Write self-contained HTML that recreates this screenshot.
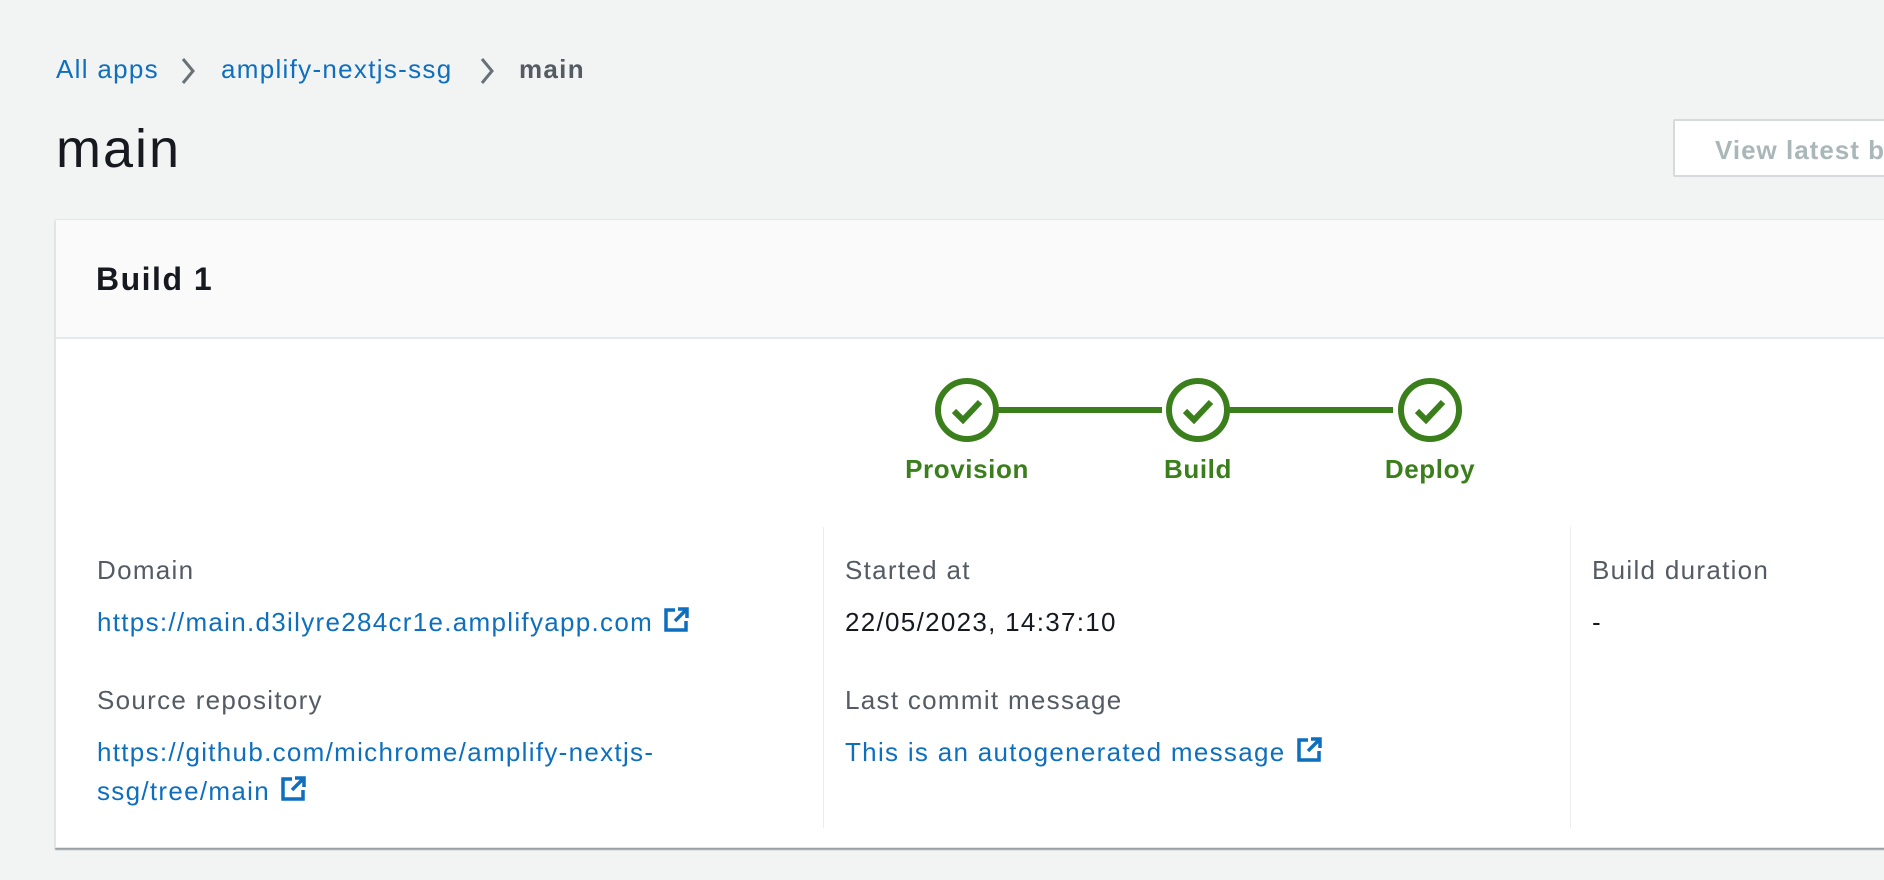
<!DOCTYPE html>
<html><head><meta charset="utf-8"><style>
*{margin:0;padding:0;box-sizing:border-box}
body{width:1884px;height:880px;background:#f2f3f3;font-family:"Liberation Sans",sans-serif;position:relative;overflow:hidden;color:#16191f}
.a{position:absolute;white-space:nowrap}
.lk{color:#0f6fbf}
.lab{color:#545b64;font-size:26px;letter-spacing:1.3px}
.val{font-size:26px;letter-spacing:1.3px}
.bc{font-size:26px;letter-spacing:1.3px}
.card{position:absolute;left:55px;top:219px;width:1860px;height:629px;background:#fff;border:1px solid #e3e6e6;box-shadow:0 2px 1px #99a0a4}
.hdr{position:absolute;left:0;top:0;right:0;height:119px;background:#fafafa;border-bottom:2px solid #e6e9e9}
.g{color:#3b7f1c;font-weight:bold;font-size:26px;letter-spacing:0.6px;transform:translateX(-50%)}
.ext{display:inline-block;vertical-align:-2px;margin-left:10px}
</style></head><body>
<div class="a bc lk" style="left:56px;top:54px">All apps</div>
<svg class="a" style="left:178px;top:56px" width="20" height="30"><path d="M5 3 L15 15 L5 27" stroke="#687078" stroke-width="3" fill="none"/></svg>
<div class="a bc lk" style="left:221px;top:54px">amplify-nextjs-ssg</div>
<svg class="a" style="left:477px;top:56px" width="20" height="30"><path d="M5 3 L15 15 L5 27" stroke="#687078" stroke-width="3" fill="none"/></svg>
<div class="a bc" style="left:519px;top:54px;font-weight:bold;color:#545b64">main</div>
<div class="a" style="left:56px;top:118px;font-size:54px;letter-spacing:2px">main</div>
<div class="a" style="left:1673px;top:119px;width:260px;height:58px;background:#fff;border:2px solid #d5dbdb;border-radius:2px;color:#aab7b8;font-weight:bold;font-size:26px;letter-spacing:1px;padding:14px 0 0 40px">View latest build</div>
<div class="card">
<div class="hdr"><div class="a" style="left:40px;top:41px;font-size:32px;letter-spacing:1.5px;font-weight:bold">Build 1</div></div>
<svg class="a" style="left:870px;top:155px" width="600" height="80">
<g stroke="#3b7f1c" stroke-width="6" fill="none">
<line x1="72" y1="35" x2="236" y2="35"/><line x1="303" y1="35" x2="467" y2="35"/>
<circle cx="41" cy="35" r="29"/><circle cx="272" cy="35" r="29"/><circle cx="504" cy="35" r="29"/>
<path d="M28 36 L37 45 L54 27"/><path d="M259 36 L268 45 L285 27"/><path d="M491 36 L500 45 L517 27"/>
</g></svg>
<div class="a g" style="left:911px;top:234px">Provision</div>
<div class="a g" style="left:1142px;top:234px">Build</div>
<div class="a g" style="left:1374px;top:234px">Deploy</div>
<div class="a" style="left:767px;top:307px;width:1px;height:301px;background:#eaeded"></div>
<div class="a" style="left:1514px;top:307px;width:1px;height:301px;background:#eaeded"></div>
<div class="a lab" style="left:41px;top:335px">Domain</div>
<div class="a val lk" style="left:41px;top:387px">https://main.d3ilyre284cr1e.amplifyapp.com<svg class="ext" width="26" height="26" viewBox="0 0 26 26"><path d="M12 3H3v20h20v-9" stroke="#0f6fbf" stroke-width="3.5" fill="none"/><path d="M15 2h9v9M23 3L12 14" stroke="#0f6fbf" stroke-width="3.5" fill="none"/></svg></div>
<div class="a lab" style="left:41px;top:465px">Source repository</div>
<div class="a val lk" style="left:41px;top:517px">https://github.com/michrome/amplify-nextjs-</div>
<div class="a val lk" style="left:41px;top:556px">ssg/tree/main<svg class="ext" width="26" height="26" viewBox="0 0 26 26"><path d="M12 3H3v20h20v-9" stroke="#0f6fbf" stroke-width="3.5" fill="none"/><path d="M15 2h9v9M23 3L12 14" stroke="#0f6fbf" stroke-width="3.5" fill="none"/></svg></div>
<div class="a lab" style="left:789px;top:335px">Started at</div>
<div class="a val" style="left:789px;top:387px">22/05/2023, 14:37:10</div>
<div class="a lab" style="left:789px;top:465px">Last commit message</div>
<div class="a val lk" style="left:789px;top:517px">This is an autogenerated message<svg class="ext" width="26" height="26" viewBox="0 0 26 26"><path d="M12 3H3v20h20v-9" stroke="#0f6fbf" stroke-width="3.5" fill="none"/><path d="M15 2h9v9M23 3L12 14" stroke="#0f6fbf" stroke-width="3.5" fill="none"/></svg></div>
<div class="a lab" style="left:1536px;top:335px">Build duration</div>
<div class="a val" style="left:1536px;top:387px">-</div>
</div>
</body></html>
